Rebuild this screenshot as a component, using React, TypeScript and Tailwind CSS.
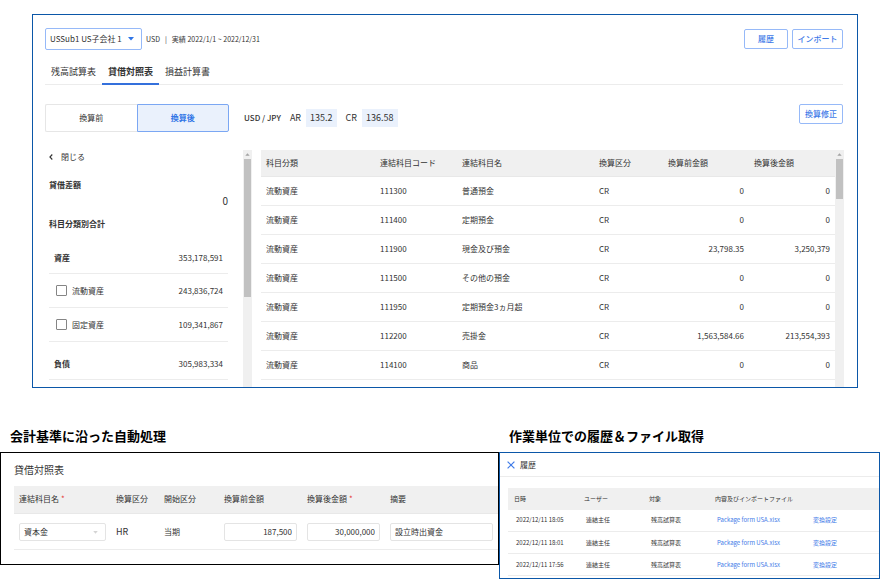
import { useState, type ReactNode } from "react";
import clsx from "clsx";

const accounts = [
  { code: "111300", name: "普通預金", before: "0", after: "0" },
  { code: "111400", name: "定期預金", before: "0", after: "0" },
  { code: "111900", name: "現金及び預金", before: "23,798.35", after: "3,250,379" },
  { code: "111500", name: "その他の預金", before: "0", after: "0" },
  { code: "111950", name: "定期預金3ヵ月超", before: "0", after: "0" },
  { code: "112200", name: "売掛金", before: "1,563,584.66", after: "213,554,393" },
  { code: "114100", name: "商品", before: "0", after: "0" },
];

const history = ["2022/12/11 18:05", "2022/12/11 18:01", "2022/12/11 17:56"];

const tabs = ["残高試算表", "貸借対照表", "損益計算書"];

function Caret({ className }: { className?: string }) {
  return (
    <svg viewBox="0 0 6 4" className={clsx("pointer-events-none absolute", className)} fill="currentColor">
      <path d="M0 0h6L3 3.6z" />
    </svg>
  );
}

function OutlineButton({ children, className }: { children: ReactNode; className?: string }) {
  return (
    <button
      className={clsx(
        "h-5 shrink-0 rounded-xs border border-[#96b9f8] text-[8px] font-medium text-[#3f7be8]",
        className
      )}
    >
      {children}
    </button>
  );
}

// Scroll rail drawn next to the list and the table
function Rail({ thumb }: { thumb: string }) {
  return (
    <div className="flex w-[9px] shrink-0 flex-col items-center bg-[#f0f0f0]">
      <svg viewBox="0 0 9 9" className="size-[9px] shrink-0" fill="#a3a3a3">
        <path d="M4.5 3.2 6.7 5.7H2.3z" />
      </svg>
      <div className={clsx("w-[7px] bg-[#c1c1c1]", thumb)} />
    </div>
  );
}

function CategoryRow({ label, value }: { label: string; value: string }) {
  return (
    <div className="flex h-[38px] items-center justify-between border-b border-[#ececec] px-[5px] pt-1.5">
      <span className="font-bold">{label}</span>
      <span>{value}</span>
    </div>
  );
}

function CheckRow({ label, value }: { label: string; value: string }) {
  return (
    <div className="flex h-[34px] items-center justify-between border-b border-[#ececec] pr-[5px] pl-[7px]">
      <label className="flex items-center gap-[5px]">
        <input type="checkbox" className="size-[11px] appearance-none rounded-[1px] border border-[#858585] bg-white" />
        {label}
      </label>
      <span>{value}</span>
    </div>
  );
}

function Sidebar() {
  return (
    <aside className="w-[179px] shrink-0">
      <button className="flex h-3.5 items-center gap-2">
        <svg viewBox="0 0 4 6" className="h-1.5 w-1" fill="none" stroke="currentColor" strokeWidth="1.1">
          <path d="M3.3.5.9 3l2.4 2.5" />
        </svg>
        閉じる
      </button>
      <h2 className="mt-[13px] leading-4 font-bold">貸借差額</h2>
      <p className="text-right text-[10px] leading-4">0</p>
      <h2 className="mt-[7px] mb-1 leading-4 font-bold">科目分類別合計</h2>
      <CategoryRow label="資産" value="353,178,591" />
      <CheckRow label="流動資産" value="243,836,724" />
      <CheckRow label="固定資産" value="109,341,867" />
      <CategoryRow label="負債" value="305,983,334" />
    </aside>
  );
}

function AccountTable() {
  return (
    <table className="mb-[7px] w-full table-fixed self-start">
      <colgroup>
        <col className="w-[114px]" />
        <col className="w-[82px]" />
        <col className="w-[137px]" />
        <col className="w-[69px]" />
        <col className="w-[86px]" />
        <col className="w-[86px]" />
      </colgroup>
      <thead>
        <tr className="h-[26px] bg-[#f0f0f0] text-left">
          {["科目分類", "連結科目コード", "連結科目名", "換算区分", "換算前金額", "換算後金額"].map((h) => (
            <th key={h} className="border-b border-[#e8e8e8] px-[5px] font-normal">
              {h}
            </th>
          ))}
        </tr>
      </thead>
      <tbody>
        {accounts.map((a) => (
          <tr key={a.code} className="h-[29px] border-b border-[#ececec]">
            <td className="px-[5px]">流動資産</td>
            <td className="px-[5px]">{a.code}</td>
            <td className="px-[5px]">{a.name}</td>
            <td className="px-[5px]">CR</td>
            <td className="px-[5px] text-right">{a.before}</td>
            <td className="px-[5px] text-right">{a.after}</td>
          </tr>
        ))}
      </tbody>
    </table>
  );
}

function Rate({ label, value }: { label: string; value: string }) {
  return (
    <div className="flex items-center gap-[5px]">
      {label}
      <span className="bg-[#eaf1fc] px-1 leading-[18px]">{value}</span>
    </div>
  );
}

function BalancePanel() {
  const [tab, setTab] = useState(tabs[1]);
  const [converted, setConverted] = useState(true);

  return (
    <section className="mx-8 border border-[#0b57a8] pr-3.5 pl-3">
      <header className="flex items-center gap-1 pt-[13px]">
        <div className="relative">
          <select
            aria-label="会社"
            className="h-[22px] w-[97px] appearance-none rounded-xs border border-[#96b9f8] pl-1 text-[8px]"
          >
            <option>USSub1 US子会社 1</option>
          </select>
          <Caret className="top-[9px] right-2 h-1 w-1.5 text-[#2f75e6]" />
        </div>
        <p className="flex grow gap-[5px] text-[7px]">
          <span>USD</span>
          <span>|</span>
          <span>実績 2022/1/1 ~ 2022/12/31</span>
        </p>
        <OutlineButton className="w-11">履歴</OutlineButton>
        <OutlineButton className="w-[51px]">インポート</OutlineButton>
      </header>

      <nav className="mt-[9px] flex border-b border-[#ececec] text-[9px]">
        {tabs.map((t) => (
          <button
            key={t}
            onClick={() => setTab(t)}
            className={clsx(
              "-mb-px h-[26px] border-b-2 px-1.5 pt-0.5",
              t === tab ? "border-[#3470dc] font-bold" : "border-transparent"
            )}
          >
            {t}
          </button>
        ))}
      </nav>

      <div className="mt-[19px] flex items-start">
        <div className="flex h-7 w-[184px] shrink-0">
          <button
            onClick={() => setConverted(false)}
            className={clsx(
              "flex-1 rounded-l-xs border",
              converted ? "border-r-0 border-[#e6e6e6]" : "border-[#96b9f8] bg-[#eaf1fc] font-bold text-[#2f75e6]"
            )}
          >
            換算前
          </button>
          <button
            onClick={() => setConverted(true)}
            className={clsx(
              "flex-1 rounded-r-xs border",
              converted ? "border-[#7ba7f3] bg-[#eaf1fc] font-bold text-[#2f75e6]" : "border-l-0 border-[#e6e6e6]"
            )}
          >
            換算後
          </button>
        </div>
        <div className="ml-[15px] flex h-7 grow items-center gap-[9px] text-[9px]">
          <span className="text-[8px] font-medium">USD / JPY</span>
          <Rate label="AR" value="135.2" />
          <Rate label="CR" value="136.58" />
        </div>
        <OutlineButton className="w-11">換算修正</OutlineButton>
      </div>

      <div className="mt-[18px] flex pl-1">
        <Sidebar />
        <div className="ml-[15px] flex">
          <Rail thumb="h-[138px]" />
        </div>
        <div className="ml-[9px] flex grow">
          <AccountTable />
          <Rail thumb="h-10" />
        </div>
      </div>
    </section>
  );
}

function Required() {
  return <span className="ml-0.5 text-[#e53935]">*</span>;
}

function EntryPanel() {
  const field = "block h-[18px] w-full rounded-xs border border-[#e4e4e4] px-1";

  return (
    <section>
      <h2 className="pl-2.5 text-[13px] leading-[19px] font-bold text-black">会計基準に沿った自動処理</h2>
      <div className="mt-[7px] border border-black pb-3.5 pl-[13px]">
        <h3 className="pt-[9px] text-[10px] leading-4">貸借対照表</h3>
        <table className="mt-2 w-full table-fixed">
          <colgroup>
            <col className="w-[97px]" />
            <col className="w-12" />
            <col className="w-[60px]" />
            <col className="w-[83px]" />
            <col className="w-[83px]" />
            <col className="w-[113px]" />
          </colgroup>
          <thead>
            <tr className="h-7 border-b border-[#e8e8e8] bg-[#f0f0f0] text-left">
              <th className="px-[5px] font-normal">
                連結科目名
                <Required />
              </th>
              <th className="px-[5px] font-normal">換算区分</th>
              <th className="px-[5px] font-normal">開始区分</th>
              <th className="px-[5px] font-normal">換算前金額</th>
              <th className="px-[5px] font-normal">
                換算後金額
                <Required />
              </th>
              <th className="px-[5px] font-normal">摘要</th>
            </tr>
          </thead>
          <tbody>
            <tr className="h-9 border-b border-[#ececec]">
              <td className="px-[5px]">
                <div className="relative">
                  <select aria-label="連結科目名" className={clsx(field, "appearance-none")}>
                    <option>資本金</option>
                  </select>
                  <Caret className="top-[8px] right-2 h-[3px] w-[5px] text-[#d4d4d4]" />
                </div>
              </td>
              <td className="px-[5px] text-[9px]">HR</td>
              <td className="px-[5px]">当期</td>
              <td className="px-[5px]">
                <input aria-label="換算前金額" defaultValue="187,500" className={clsx(field, "text-right")} />
              </td>
              <td className="px-[5px]">
                <input aria-label="換算後金額" defaultValue="30,000,000" className={clsx(field, "text-right")} />
              </td>
              <td className="px-[5px]">
                <input aria-label="摘要" defaultValue="設立時出資金" className={field} />
              </td>
            </tr>
          </tbody>
        </table>
      </div>
    </section>
  );
}

function HistoryPanel() {
  return (
    <section>
      <h2 className="pl-2.5 text-[13px] leading-[19px] font-bold text-black">作業単位での履歴＆ファイル取得</h2>
      <div className="mt-[7px] border border-[#0b57a8] pb-0.5">
        <div className="flex h-6 items-center gap-[5px] border-b border-[#ececec] pt-0.5 pl-[7px]">
          <button aria-label="閉じる">
            <svg viewBox="0 0 8 8" className="size-2" fill="none" stroke="#3f7be8" strokeWidth="1.2">
              <path d="m.6.6 6.8 6.8M7.4.6.6 7.4" />
            </svg>
          </button>
          <h3>履歴</h3>
        </div>
        <div className="pt-[11px] pl-2">
          <table className="w-full table-fixed text-[6px]">
            <colgroup>
              <col className="w-[70px]" />
              <col className="w-[65px]" />
              <col className="w-[66px]" />
              <col className="w-24" />
              <col className="w-[74px]" />
            </colgroup>
            <thead>
              <tr className="h-[22px] bg-[#f0f0f0] text-left">
                <th className="pl-1.5 font-normal">日時</th>
                <th className="pl-1.5 font-normal">ユーザー</th>
                <th className="pl-1.5 font-normal">対象</th>
                <th className="pl-1.5 font-normal" colSpan={2}>
                  内容及びインポートファイル
                </th>
              </tr>
            </thead>
            <tbody>
              {history.map((time) => (
                <tr key={time} className="h-[22px] border-b border-[#ececec]">
                  <td className="pl-2">{time}</td>
                  <td className="pl-2">連結主任</td>
                  <td className="pl-2">残高試算表</td>
                  <td className="pl-2">
                    <a href="#file" className="text-[#3f7be8]">
                      Package form USA.xlsx
                    </a>
                  </td>
                  <td className="pl-2">
                    <a href="#settings" className="text-[#3f7be8]">
                      変換設定
                    </a>
                  </td>
                </tr>
              ))}
            </tbody>
          </table>
        </div>
      </div>
    </section>
  );
}

export default function App() {
  return (
    <main className="bg-white pt-3.5 font-['Noto_Sans_CJK_JP',sans-serif] text-[8px] leading-3 whitespace-nowrap text-[#333]">
      <BalancePanel />
      <div className="mt-[38px] mr-2.5 grid grid-cols-[499fr_381fr] items-start">
        <EntryPanel />
        <HistoryPanel />
      </div>
    </main>
  );
}
